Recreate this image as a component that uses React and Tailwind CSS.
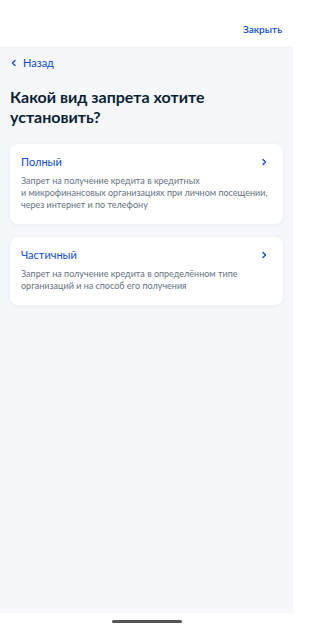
import React from "react";

const options = [
  {
    title: "Полный",
    text: (
      <>
        Запрет на получение кредита в кредитных
        <br />
        и микрофинансовых организациях при личном посещении, через интернет и по телефону
      </>
    ),
  },
  {
    title: "Частичный",
    text: "Запрет на получение кредита в определённом типе организаций и на способ его получения",
  },
];

const Chevron = ({ dir = "right", className = "" }) => (
  <svg
    viewBox="0 0 8 8"
    className={className}
    fill="none"
    stroke="currentColor"
    strokeWidth="1.4"
    strokeLinecap="round"
    strokeLinejoin="round"
  >
    {dir == "right" ? <path d="M3 1.5 L5.5 4 L3 6.5" /> : <path d="M5 1.5 L2.5 4 L5 6.5" />}
  </svg>
);

const App = () => {
  return (
    <div
      className="h-[630px] w-[293px] flex flex-col bg-white overflow-hidden"
      style={{ fontFamily: "Lato, 'Noto Sans', sans-serif" }}
    >
      {/* header */}
      <div className="h-[46px] shrink-0 flex items-end justify-end pr-[11px] pb-[12px]">
        <span className="text-[10px] font-semibold text-[#0d4cd3] leading-none">Закрыть</span>
      </div>

      <div className="flex-1 bg-[#f5f7fb] px-[10px]">
        <div className="flex items-center gap-[5px] pt-[10px] text-[#0d4cd3]">
          <Chevron dir="left" className="w-[8px] h-[8px]" />
          <span className="text-[11px] leading-[13px]">Назад</span>
        </div>

        <h1 className="mt-[18px] text-[16px] font-bold leading-[20px] text-[#0b1f33]">
          Какой вид запрета хотите установить?
        </h1>

        <div className="mt-[17px] flex flex-col gap-[13px]">
          {options.map((o) => (
            <div
              key={o.title}
              className="bg-white rounded-[8px] px-[11px] pt-[11px] pb-[13px] shadow-[0_1px_4px_rgba(11,31,51,0.06)]"
            >
              <div className="flex items-center justify-between">
                <span className="text-[11px] leading-[14px] text-[#0d4cd3]">{o.title}</span>
                <Chevron className="w-[8px] h-[8px] text-[#0d4cd3] mr-[4px]" />
              </div>
              <p className="mt-[6px] text-[9px] leading-[12px] text-[#66727f]">{o.text}</p>
            </div>
          ))}
        </div>
      </div>

      {/* home indicator */}
      <div className="h-[17px] shrink-0 flex items-center justify-center">
        <div className="w-[70px] h-[3px] rounded-full bg-[#555]" />
      </div>
    </div>
  );
};

export default App;
